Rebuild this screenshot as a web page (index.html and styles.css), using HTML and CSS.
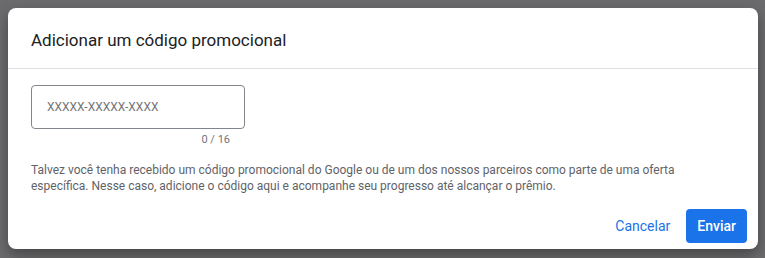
FILE: index.html
```html
<!DOCTYPE html>
<html lang="pt-BR">
<head>
    <meta charset="UTF-8">
    <meta name="viewport" content="width=device-width, initial-scale=1.0">
    <title>Adicionar um código promocional</title>
    <link rel="stylesheet" href="styles.css">
</head>
<body>
    <div class="dialog">
        <div class="dialog-header">Adicionar um código promocional</div>

        <div class="dialog-body">
            <div class="field">
                <input type="text" class="code-input" placeholder="XXXXX-XXXXX-XXXX" maxlength="16">
                <div class="counter">0 / 16</div>
            </div>
            <p class="description">Talvez você tenha recebido um código promocional do Google ou de um dos nossos parceiros como parte de uma oferta específica. Nesse caso, adicione o código aqui e acompanhe seu progresso até alcançar o prêmio.</p>
        </div>

        <div class="dialog-footer">
            <button class="btn btn-text">Cancelar</button>
            <button class="btn btn-primary">Enviar</button>
        </div>
    </div>
</body>
</html>
```

FILE: styles.css
```css
body {
    margin: 0;
    padding: 8px 7px 8px 8px;
    background: #6b6b6d;
    font-family: Roboto, "Liberation Sans", Arial, sans-serif;
    height: 258px;
    box-sizing: border-box;
    overflow: hidden;
}

.dialog {
    background: #fff;
    border-radius: 8px;
    box-shadow: 0 6px 14px rgba(0, 0, 0, 0.35);
    height: 241px;
    display: flex;
    flex-direction: column;
}

.dialog-header {
    padding: 20px 23px 16px 23px;
    font-size: 17px;
    line-height: 24px;
    color: #202124;
    border-bottom: 1px solid #e0e0e0;
}

.dialog-body {
    padding: 16px 23px 0 23px;
}

.field {
    width: 214px;
}

.code-input {
    display: block;
    width: 214px;
    height: 44px;
    box-sizing: border-box;
    border: 1px solid #80868b;
    border-radius: 4px;
    padding: 0 15px;
    font-family: inherit;
    font-size: 12px;
    color: #202124;
    outline: none;
}

.code-input::placeholder {
    color: #757575;
}

.counter {
    margin-top: 3px;
    padding-right: 15px;
    text-align: right;
    font-size: 11px;
    line-height: 16px;
    color: #70757a;
}

.description {
    margin: 14px 0 0 0;
    font-size: 12px;
    line-height: 16px;
    color: #5f6368;
}

.dialog-footer {
    display: flex;
    justify-content: flex-end;
    align-items: center;
    gap: 8px;
    padding: 15px 11px 0 0;
}

.btn {
    height: 34px;
    border: none;
    border-radius: 4px;
    font-family: inherit;
    font-size: 14px;
    cursor: pointer;
}

.btn-text {
    background: none;
    color: #1a73e8;
    padding: 0 8px;
}

.btn-primary {
    background: #1a73e8;
    color: #fff;
    font-weight: 500;
    padding: 0 11px;
}
```
